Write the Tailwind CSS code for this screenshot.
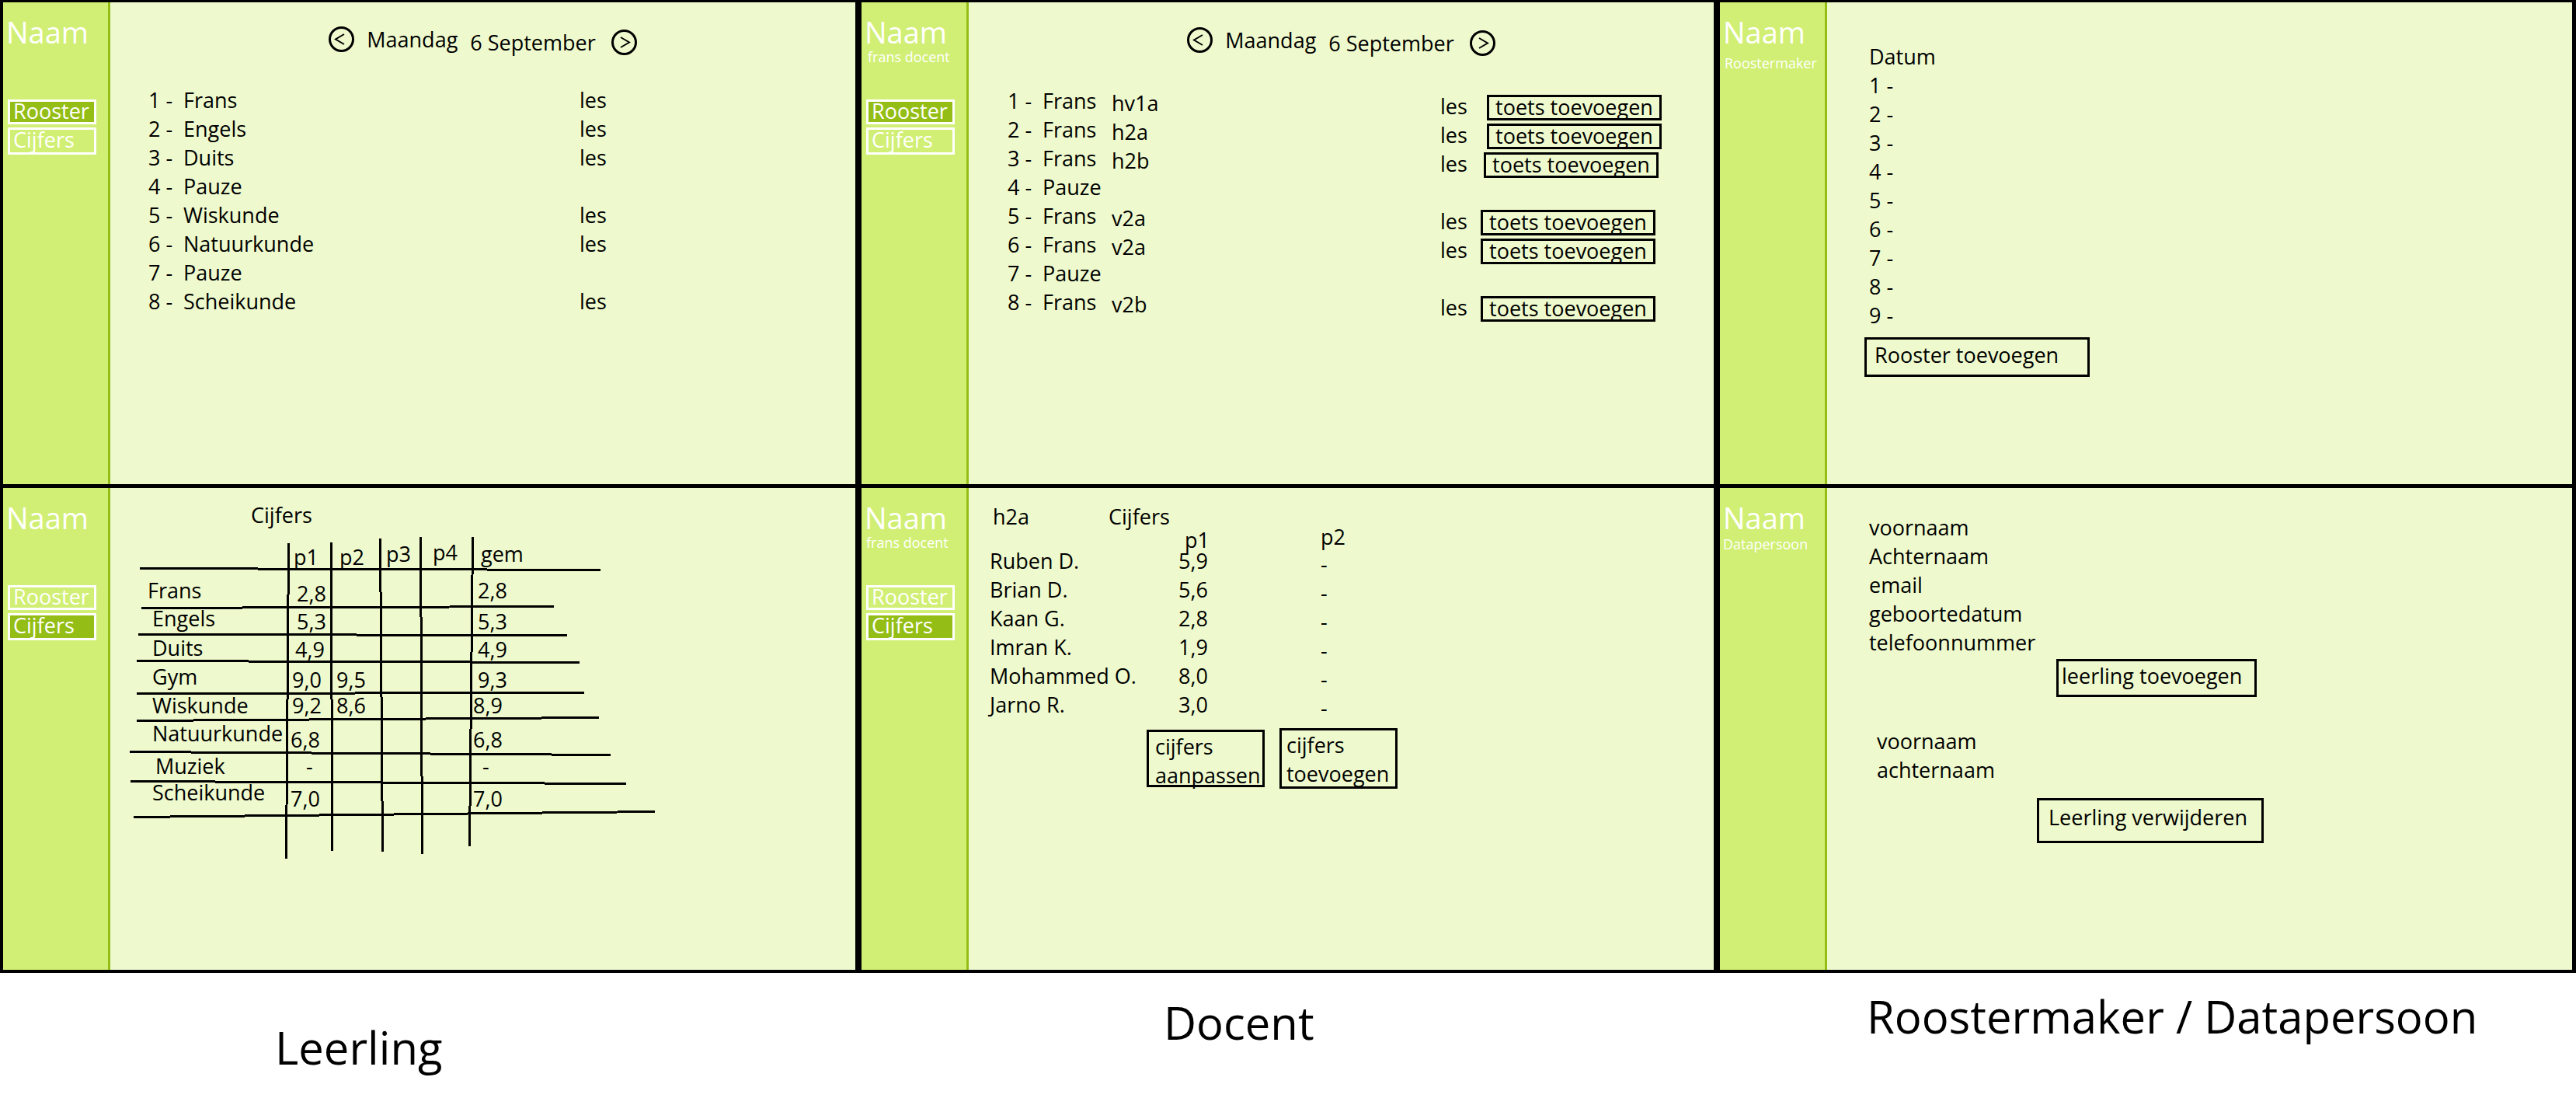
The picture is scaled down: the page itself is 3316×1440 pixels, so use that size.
<!DOCTYPE html>
<html lang="nl">
<head>
<meta charset="utf-8">
<meta name="viewport" content="width=device-width, initial-scale=1">
<title>Rooster en cijfers</title>
<script src="https://cdn.jsdelivr.net/npm/@tailwindcss/browser@4"></script>
</head>
<body class="bg-white text-black font-['Open_Sans','Noto_Sans',sans-serif] text-[27px] leading-[26px]">

<div class="grid grid-cols-3 gap-x-2 gap-y-[5px] bg-black pl-1 pr-[5px] pt-[3px] pb-1">

  <!-- Leerling: rooster -->
  <section class="flex min-h-[620px] bg-[#eefacd]">
    <aside class="w-[138px] shrink-0 border-r-[3px] border-[#94be16] bg-[#d1ef74] text-white">
      <div class="h-[125px] pl-1 pt-[18px]">
        <h2 class="text-[38px] leading-[40px]">Naam</h2>
      </div>
      <nav class="flex flex-col gap-1 pl-1.5">
        <a href="#" class="w-[114px] h-8 border-3 border-white bg-[#94be16] pl-1 font-medium leading-6" aria-current="page">Rooster</a>
        <a href="#" class="w-[114px] h-[35px] border-3 border-white pl-1">Cijfers</a>
      </nav>
    </aside>
    <main class="flex-1">
      <header class="flex justify-center gap-4 pt-[31px]">
        <div class="flex items-center gap-4 h-[33px]">
          <button aria-label="Vorige dag"><svg class="size-[33px]" viewBox="0 0 33 33" fill="none" stroke="black"><circle cx="16.5" cy="16.5" r="15" stroke-width="3"/><path d="M20 10L9 16.500L20 23" stroke-width="2"/></svg></button>
          <span>Maandag</span>
        </div>
        <div class="flex items-center gap-5 mt-1 h-[33px]">
          <span>6 September</span>
          <button aria-label="Volgende dag"><svg class="size-[33px]" viewBox="0 0 33 33" fill="none" stroke="black"><circle cx="16.500" cy="16.500" r="15" stroke-width="3"/><path d="M12 10L23 16.500L12 23" stroke-width="2"/></svg></button>
        </div>
      </header>
      <table class="block mt-[45px] pl-[49px]">
        <tbody class="block">
          <tr class="grid grid-cols-[45px_510px_1fr] h-[37px]"><td>1 -</td><td>Frans</td><td>les</td></tr>
          <tr class="grid grid-cols-[45px_510px_1fr] h-[37px]"><td>2 -</td><td>Engels</td><td>les</td></tr>
          <tr class="grid grid-cols-[45px_510px_1fr] h-[37px]"><td>3 -</td><td>Duits</td><td>les</td></tr>
          <tr class="grid grid-cols-[45px_510px_1fr] h-[37px]"><td>4 -</td><td>Pauze</td><td></td></tr>
          <tr class="grid grid-cols-[45px_510px_1fr] h-[37px]"><td>5 -</td><td>Wiskunde</td><td>les</td></tr>
          <tr class="grid grid-cols-[45px_510px_1fr] h-[37px]"><td>6 -</td><td>Natuurkunde</td><td>les</td></tr>
          <tr class="grid grid-cols-[45px_510px_1fr] h-[37px]"><td>7 -</td><td>Pauze</td><td></td></tr>
          <tr class="grid grid-cols-[45px_510px_1fr] h-[37px]"><td>8 -</td><td>Scheikunde</td><td>les</td></tr>
        </tbody>
      </table>
    </main>
  </section>

  <!-- Docent: rooster -->
  <section class="flex min-h-[620px] bg-[#eefacd]">
    <aside class="w-[138px] shrink-0 border-r-[3px] border-[#94be16] bg-[#d1ef74] text-white">
      <div class="h-[125px] pl-1 pt-[18px]">
        <h2 class="text-[38px] leading-[40px]">Naam</h2>
        <p class="pl-1 text-[18px] leading-6">frans docent</p>
      </div>
      <nav class="flex flex-col gap-1 pl-1.5">
        <a href="#" class="w-[114px] h-8 border-3 border-white bg-[#94be16] pl-1 font-medium leading-6" aria-current="page">Rooster</a>
        <a href="#" class="w-[114px] h-[35px] border-3 border-white pl-1">Cijfers</a>
      </nav>
    </aside>
    <main class="flex-1">
      <header class="flex justify-center gap-4 pt-[32px]">
        <div class="flex items-center gap-4 h-[33px]">
          <button aria-label="Vorige dag"><svg class="size-[33px]" viewBox="0 0 33 33" fill="none" stroke="black"><circle cx="16.500" cy="16.500" r="15" stroke-width="3"/><path d="M20 10L9 16.500L20 23" stroke-width="2"/></svg></button>
          <span>Maandag</span>
        </div>
        <div class="flex items-center gap-5 mt-1 h-[33px]">
          <span>6 September</span>
          <button aria-label="Volgende dag"><svg class="size-[33px]" viewBox="0 0 33 33" fill="none" stroke="black"><circle cx="16.500" cy="16.500" r="15" stroke-width="3"/><path d="M12 10L23 16.500L12 23" stroke-width="2"/></svg></button>
        </div>
      </header>
      <table class="block mt-[45px] pl-[50px]">
        <tbody class="block">
          <tr class="grid grid-cols-[45px_89px_423px_1fr] h-[37px]"><td>1 -</td><td>Frans</td><td class="pt-[3px]">hv1a</td><td class="flex gap-5 pt-[5px]"><span class="w-10 pt-0.5">les</span><button class="w-[225px] h-[33px] border-3 border-black pb-0.5">toets toevoegen</button></td></tr>
          <tr class="grid grid-cols-[45px_89px_423px_1fr] h-[37px]"><td>2 -</td><td>Frans</td><td class="pt-[3px]">h2a</td><td class="flex gap-5 pt-[5px]"><span class="w-10 pt-0.5">les</span><button class="w-[225px] h-[33px] border-3 border-black pb-0.5">toets toevoegen</button></td></tr>
          <tr class="grid grid-cols-[45px_89px_423px_1fr] h-[37px]"><td>3 -</td><td>Frans</td><td class="pt-[3px]">h2b</td><td class="flex gap-4 pt-[5px]"><span class="w-10 pt-0.5">les</span><button class="w-[225px] h-[33px] border-3 border-black pb-0.5">toets toevoegen</button></td></tr>
          <tr class="grid grid-cols-[45px_89px_423px_1fr] h-[37px]"><td>4 -</td><td>Pauze</td><td></td><td></td></tr>
          <tr class="grid grid-cols-[45px_89px_423px_1fr] h-[37px]"><td>5 -</td><td>Frans</td><td class="pt-[3px]">v2a</td><td class="flex gap-3 pt-[5px]"><span class="w-10 pt-0.5">les</span><button class="w-[225px] h-[33px] border-3 border-black pb-0.5">toets toevoegen</button></td></tr>
          <tr class="grid grid-cols-[45px_89px_423px_1fr] h-[37px]"><td>6 -</td><td>Frans</td><td class="pt-[3px]">v2a</td><td class="flex gap-3 pt-[5px]"><span class="w-10 pt-0.5">les</span><button class="w-[225px] h-[33px] border-3 border-black pb-0.5">toets toevoegen</button></td></tr>
          <tr class="grid grid-cols-[45px_89px_423px_1fr] h-[37px]"><td>7 -</td><td>Pauze</td><td></td><td></td></tr>
          <tr class="grid grid-cols-[45px_89px_423px_1fr] h-[37px]"><td>8 -</td><td>Frans</td><td class="pt-[3px]">v2b</td><td class="flex gap-3 pt-[5px]"><span class="w-10 pt-0.5">les</span><button class="w-[225px] h-[33px] border-3 border-black pb-0.5">toets toevoegen</button></td></tr>
        </tbody>
      </table>
    </main>
  </section>

  <!-- Roostermaker -->
  <section class="flex min-h-[620px] bg-[#eefacd]">
    <aside class="w-[138px] shrink-0 border-r-[3px] border-[#94be16] bg-[#d1ef74] text-white">
      <div class="h-[125px] pl-1 pt-[18px]">
        <h2 class="text-[38px] leading-[40px]">Naam</h2>
        <p class="pl-0.5 pt-2 text-[18px] leading-6">Roostermaker</p>
      </div>
    </aside>
    <main class="flex-1">
      <form class="flex flex-col items-start pl-[48px] pt-[57px]">
        <h3 class="h-[37px] pl-1.5">Datum</h3>
        <label class="flex h-[37px] w-full items-start gap-2 pl-1.5">1 -<input class="w-60 outline-none"></label>
        <label class="flex h-[37px] w-full items-start gap-2 pl-1.5">2 -<input class="w-60 outline-none"></label>
        <label class="flex h-[37px] w-full items-start gap-2 pl-1.5">3 -<input class="w-60 outline-none"></label>
        <label class="flex h-[37px] w-full items-start gap-2 pl-1.5">4 -<input class="w-60 outline-none"></label>
        <label class="flex h-[37px] w-full items-start gap-2 pl-1.5">5 -<input class="w-60 outline-none"></label>
        <label class="flex h-[37px] w-full items-start gap-2 pl-1.5">6 -<input class="w-60 outline-none"></label>
        <label class="flex h-[37px] w-full items-start gap-2 pl-1.5">7 -<input class="w-60 outline-none"></label>
        <label class="flex h-[37px] w-full items-start gap-2 pl-1.5">8 -<input class="w-60 outline-none"></label>
        <label class="flex h-[37px] w-full items-start gap-2 pl-1.5">9 -<input class="w-60 outline-none"></label>
        <button type="button" class="mt-1 h-[51px] w-[290px] border-3 border-black pb-1.5 pl-2.5 text-left">Rooster toevoegen</button>
      </form>
    </main>
  </section>

  <!-- Leerling: cijfers -->
  <section class="flex min-h-[620px] bg-[#eefacd]">
    <aside class="w-[138px] shrink-0 border-r-[3px] border-[#94be16] bg-[#d1ef74] text-white">
      <div class="h-[125px] pl-1 pt-[18px]">
        <h2 class="text-[38px] leading-[40px]">Naam</h2>
      </div>
      <nav class="flex flex-col gap-1 pl-1.5">
        <a href="#" class="w-[114px] h-8 border-3 border-white pl-1 leading-6">Rooster</a>
        <a href="#" class="w-[114px] h-[35px] border-3 border-white bg-[#94be16] pl-1 font-medium" aria-current="page">Cijfers</a>
      </nav>
    </aside>
    <main class="flex-1 pt-[22px] pl-[46px]">
      <h3 class="pl-[135px]">Cijfers</h3>
      <div class="relative mt-5">
        <!-- schuine tabellijnen -->
        <svg class="absolute left-0 top-0 h-[410px] w-[660px] overflow-visible" viewBox="38 56 660 410" fill="none" stroke="black" stroke-width="3" shape-rendering="crispEdges" aria-hidden="true">
          <path d="M30 91.500L623 93.500M32 142.500L563 140.500M28 176.500L580 177.500M26 210.500L596 212.500M26 252.500L602 251.500M26 287.500L621 283.500M17 327.500L636 331.500M18 365.500L656 368.500M22 411.500L693 404.500"/>
          <path d="M221.500 59L218.500 465M276.500 58L277.500 455M339.500 53L342.500 456M391.500 51L393.500 459M458.500 51L454.500 449"/>
        </svg>
        <table class="relative block text-left">
          <thead class="block">
            <tr class="grid grid-cols-[184px_55px_64px_52px_64px_1fr] items-end h-9 *:font-normal"><td></td><th class="pl-1.5 pb-0.5">p1</th><th class="pl-2.5 pb-0.5">p2</th><th class="pl-1.5 pb-1.5">p3</th><th class="pl-3.5 pb-2">p4</th><th class="pl-3 pb-1.5">gem</th></tr>
          </thead>
          <tbody class="block">
            <tr class="grid grid-cols-[184px_55px_64px_52px_64px_1fr] items-end h-[49px]"><th class="pl-0.5 pb-2 font-normal">Frans</th><td class="pl-2.5 pb-1">2,8</td><td></td><td></td><td></td><td class="pl-2 pb-2">2,8</td></tr>
            <tr class="grid grid-cols-[184px_55px_64px_52px_64px_1fr] items-end h-9"><th class="pl-2 pb-2 font-normal">Engels</th><td class="pl-2.5 pb-1">5,3</td><td></td><td></td><td></td><td class="pl-2 pb-1">5,3</td></tr>
            <tr class="grid grid-cols-[184px_55px_64px_52px_64px_1fr] items-end h-[34px]"><th class="pl-2 pb-1 font-normal">Duits</th><td class="pl-2 pb-0.5">4,9</td><td></td><td></td><td></td><td class="pl-2 pb-0.5">4,9</td></tr>
            <tr class="grid grid-cols-[184px_55px_64px_52px_64px_1fr] items-end h-[41px]"><th class="pl-2 pb-2 font-normal">Gym</th><td class="pl-1 pb-1">9,0</td><td class="pl-1.5 pb-1">9,5</td><td></td><td></td><td class="pl-2 pb-1">9,3</td></tr>
            <tr class="grid grid-cols-[184px_55px_64px_52px_64px_1fr] items-end h-[33px]"><th class="pl-2 pb-1 font-normal">Wiskunde</th><td class="pl-1 pb-1">9,2</td><td class="pl-1.5 pb-1">8,6</td><td></td><td></td><td class="pl-0.5 pb-1">8,9</td></tr>
            <tr class="grid grid-cols-[184px_55px_64px_52px_64px_1fr] items-end h-11"><th class="pl-2 pb-3 font-normal">Natuurkunde</th><td class="pl-0.5 pb-1">6,8</td><td></td><td></td><td></td><td class="pl-0.5 pb-1">6,8</td></tr>
            <tr class="grid grid-cols-[184px_55px_64px_52px_64px_1fr] items-end h-[38px]"><th class="pl-3 pb-2 font-normal">Muziek</th><td class="pl-5.5 pb-2">-</td><td></td><td></td><td></td><td class="pl-3.5 pb-2">-</td></tr>
            <tr class="grid grid-cols-[184px_55px_64px_52px_64px_1fr] items-end h-[41px]"><th class="pl-2 pb-4 font-normal">Scheikunde</th><td class="pl-0.5 pb-2">7,0</td><td></td><td></td><td></td><td class="pl-0.5 pb-2">7,0</td></tr>
          </tbody>
        </table>
      </div>
    </main>
  </section>

  <!-- Docent: cijfers -->
  <section class="flex min-h-[620px] bg-[#eefacd]">
    <aside class="w-[138px] shrink-0 border-r-[3px] border-[#94be16] bg-[#d1ef74] text-white">
      <div class="h-[125px] pl-1 pt-[18px]">
        <h2 class="text-[38px] leading-[40px]">Naam</h2>
        <p class="pl-0.5 text-[18px] leading-6">frans docent</p>
      </div>
      <nav class="flex flex-col gap-1 pl-1.5">
        <a href="#" class="w-[114px] h-8 border-3 border-white pl-1 leading-6">Rooster</a>
        <a href="#" class="w-[114px] h-[35px] border-3 border-white bg-[#94be16] pl-1 font-medium" aria-current="page">Cijfers</a>
      </nav>
    </aside>
    <main class="flex-1 pl-[27px] pt-6">
      <header class="flex pl-1"><span class="w-[149px]">h2a</span><h3>Cijfers</h3></header>
      <table class="block text-left">
        <thead class="block">
          <tr class="grid grid-cols-[243px_183px_1fr] h-[31px] *:font-normal"><td></td><th class="pl-2 pt-1">p1</th><th>p2</th></tr>
        </thead>
        <tbody class="block">
          <tr class="grid grid-cols-[243px_183px_1fr] h-[37px]"><th class="font-normal">Ruben D.</th><td>5,9</td><td class="pt-1">-</td></tr>
          <tr class="grid grid-cols-[243px_183px_1fr] h-[37px]"><th class="font-normal">Brian D.</th><td>5,6</td><td class="pt-1">-</td></tr>
          <tr class="grid grid-cols-[243px_183px_1fr] h-[37px]"><th class="font-normal">Kaan G.</th><td>2,8</td><td class="pt-1">-</td></tr>
          <tr class="grid grid-cols-[243px_183px_1fr] h-[37px]"><th class="font-normal">Imran K.</th><td>1,9</td><td class="pt-1">-</td></tr>
          <tr class="grid grid-cols-[243px_183px_1fr] h-[37px]"><th class="font-normal">Mohammed O.</th><td>8,0</td><td class="pt-1">-</td></tr>
          <tr class="grid grid-cols-[243px_183px_1fr] h-[37px]"><th class="font-normal">Jarno R.</th><td>3,0</td><td class="pt-1">-</td></tr>
        </tbody>
      </table>
      <div class="flex items-center gap-[19px] pl-[202px] pt-1.5">
        <button class="h-[74px] w-[152px] border-3 border-black pl-2 text-left leading-[37px] whitespace-nowrap">cijfers<br>aanpassen</button>
        <button class="h-[78px] w-[152px] border-3 border-black pb-1 pl-1.5 text-left leading-[37px] whitespace-nowrap">cijfers<br>toevoegen</button>
      </div>
    </main>
  </section>

  <!-- Datapersoon -->
  <section class="flex min-h-[620px] bg-[#eefacd]">
    <aside class="w-[138px] shrink-0 border-r-[3px] border-[#94be16] bg-[#d1ef74] text-white">
      <div class="h-[125px] pl-1 pt-[18px]">
        <h2 class="text-[38px] leading-[40px]">Naam</h2>
        <p class="pt-0.5 text-[18px] leading-6">Datapersoon</p>
      </div>
    </aside>
    <main class="flex-1 pl-[54px] pt-[38px]">
      <form class="flex flex-col items-start">
        <label class="flex h-[37px] w-full items-start gap-3">voornaam<input class="w-60 outline-none"></label>
        <label class="flex h-[37px] w-full items-start gap-3">Achternaam<input class="w-60 outline-none"></label>
        <label class="flex h-[37px] w-full items-start gap-3">email<input class="w-60 outline-none"></label>
        <label class="flex h-[37px] w-full items-start gap-3">geboortedatum<input class="w-60 outline-none"></label>
        <label class="flex h-[34px] w-full items-start gap-3">telefoonnummer<input class="w-60 outline-none"></label>
        <button type="button" class="ml-[241px] h-[49px] w-[258px] border-3 border-black pb-1.5 pl-1 text-left">leerling toevoegen</button>
      </form>
      <form class="flex flex-col items-start pt-[44px]">
        <label class="flex h-[37px] w-full items-start gap-3 pl-2.5">voornaam<input class="w-60 outline-none"></label>
        <label class="flex h-[37px] w-full items-start gap-3 pl-2.5">achternaam<input class="w-60 outline-none"></label>
        <button type="button" class="mt-3 ml-[216px] h-[58px] w-[292px] border-3 border-black pb-2 pl-3 text-left">Leerling verwijderen</button>
      </form>
    </main>
  </section>
</div>

<footer class="grid grid-cols-3 gap-x-2 pl-1 pr-[5px] pb-5 text-[58px] leading-[80px]">
  <h1 class="pl-[350px] pt-[56px]">Leerling</h1>
  <h1 class="pl-[389px] pt-[24px]">Docent</h1>
  <h1 class="pl-[189px] pt-[16px] whitespace-nowrap">Roostermaker / Datapersoon</h1>
</footer>

</body>
</html>
